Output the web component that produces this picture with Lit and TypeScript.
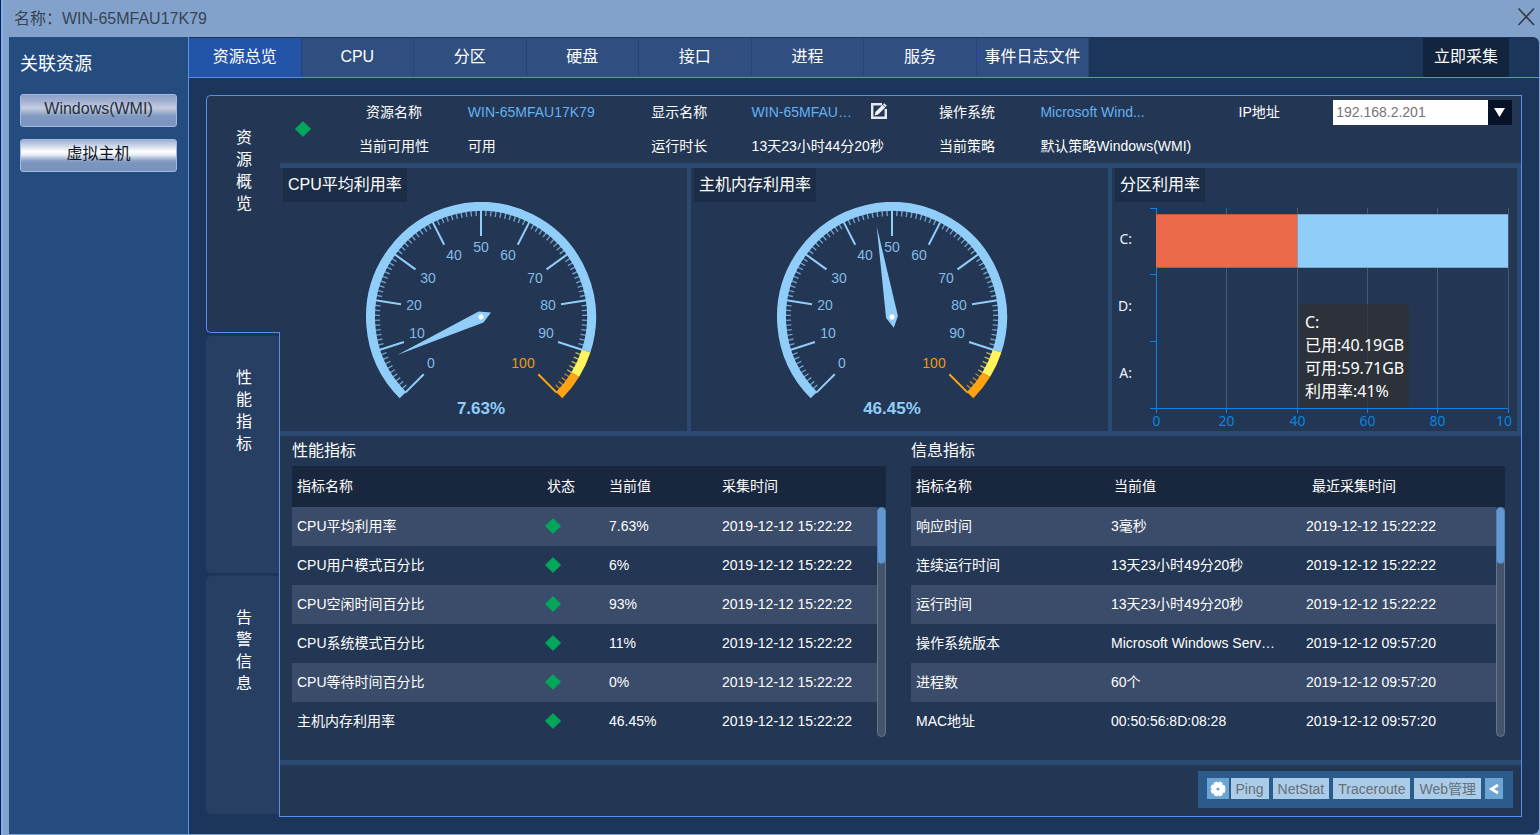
import { LitElement, html, css, svg } from "lit";
import { customElement, property } from "lit/decorators.js";
import { classMap } from "lit/directives/class-map.js";

const point = (cx: number, cy: number, r: number, deg: number) => {
  const a = (deg * Math.PI) / 180;
  return [cx + r * Math.cos(a), cy - r * Math.sin(a)];
};

@customElement("gauge-dial")
class GaugeDial extends LitElement {
  @property({ type: Number }) value = 0;

  static styles = css`
    :host { display: block; }
    svg { display: block; width: 401px; height: 229px; font: 14px "Liberation Sans", sans-serif; }
    .label { text-anchor: middle; fill: #84bbe6; }
    .label.hot { fill: #eb9715; }
    .value { text-anchor: middle; fill: #90cdf9; font-size: 17px; font-weight: bold; }
  `;

  private static labels = [
    [0, -50, 46], [10, -64, 16], [20, -67, -12], [30, -53, -39], [40, -27, -62],
    [50, 0, -70], [60, 27, -62], [70, 54, -39], [80, 67, -12], [90, 65, 16], [100, 42, 46],
  ];

  private cx = 201;
  private cy = 115;

  private angle(pct: number) {
    return 225 - pct * 2.7;
  }

  private band(from: number, to: number, color: string) {
    const [x1, y1] = point(this.cx, this.cy, 110.5, this.angle(from));
    const [x2, y2] = point(this.cx, this.cy, 110.5, this.angle(to));
    const large = (to - from) * 2.7 > 180 ? 1 : 0;
    return svg`<path d="M${x1} ${y1}A110.5 110.5 0 ${large} 1 ${x2} ${y2}" fill="none" stroke=${color} stroke-width="9" />`;
  }

  private tick(pct: number) {
    const major = pct % 10 === 0;
    const color = pct > 95 ? "#ffa312" : pct > 90 ? "#fff45c" : "#90cdf9";
    const [x1, y1] = point(this.cx, this.cy, 107, this.angle(pct));
    const [x2, y2] = point(this.cx, this.cy, major ? 81 : 101, this.angle(pct));
    return svg`<line x1=${x1} y1=${y1} x2=${x2} y2=${y2} stroke=${color}
      stroke-width=${major ? 2 : 1.4} opacity=${major ? 1 : 0.7} />`;
  }

  render() {
    const { cx, cy } = this;
    return html`<svg viewBox="0 0 401 229" role="img" aria-label="${this.value}%">
      ${Array.from({ length: 101 }, (_, i) => this.tick(i))}
      ${this.band(0, 90, "#90cdf9")} ${this.band(90, 95, "#fff45c")} ${this.band(95, 100, "#ffa312")}
      ${GaugeDial.labels.map(
        ([n, dx, dy]) => svg`<text class="label ${n === 100 ? "hot" : ""}" x=${cx + dx} y=${cy + dy + 5}>${n}</text>`
      )}
      <g transform="translate(${cx} ${cy}) rotate(${-this.angle(this.value)})">
        <path d="M92 0L0 -6L-11 0L0 6Z" fill="#90cdf9" />
        <circle r="2.6" fill="#fff" />
      </g>
      <text class="value" x=${cx} y=${cy + 97}>${this.value}%</text>
    </svg>`;
  }
}

@customElement("disk-chart")
class DiskChart extends LitElement {
  static styles = css`
    :host { display: block; position: relative; }
    svg { display: block; width: 401px; height: 229px; font: 14px "Noto Sans", "Noto Sans CJK SC", sans-serif; }
    .grid { stroke: #4a5868; }
    .axis { stroke: #0a84de; }
    .num { fill: #0a84de; text-anchor: middle; }
    .cat { fill: #f0f3f7; text-anchor: end; }
    .tip {
      position: absolute; left: 188px; top: 102px;
      padding: 7px 5px 5px; box-sizing: border-box;
      border-radius: 4px; background: rgba(50, 50, 50, 0.75); color: #fff;
      font: 16px/23px "Noto Sans", "Noto Sans CJK SC", sans-serif; white-space: nowrap;
    }
  `;

  render() {
    const xs = [44.5, 114.5, 185.5, 255.5, 325.5, 396.5];
    const ys = [6.5, 72.5, 139.5, 206.5];
    const marks = ["0", "20", "40", "60", "80", "10"];
    return html`<svg viewBox="0 0 401 229" role="img" aria-label="分区利用率">
        ${xs.slice(1).map((x) => svg`<line class="grid" x1=${x} x2=${x} y1="6" y2="206" />`)}
        <path class="axis" fill="none" d="M44.5 6V206.5H396.5" />
        ${ys.map((y) => svg`<line class="axis" x1="38" x2="44" y1=${y} y2=${y} />`)}
        ${xs.map((x) => svg`<line class="axis" x1=${x} x2=${x} y1="207" y2="211" />`)}
        <rect x="44" y="12" width="141.5" height="54" fill="#ec6a49" />
        <rect x="185.5" y="12" width="210.5" height="54" fill="#90cdf9" />
        <path d="M44 12.5H396M44 65.5H396" stroke="#000" stroke-opacity="0.18" />
        ${marks.map((t, i) => svg`<text class="num" x=${Math.min(xs[i], 392)} y="224">${t}</text>`)}
        ${["C:", "D:", "A:"].map((t, i) => svg`<text class="cat" x="20" y=${42 + i * 67}>${t}</text>`)}
      </svg>
      <div class="tip" role="tooltip">C:<br />已用:40.19GB<br />可用:59.71GB<br />利用率:41%</div>`;
  }
}

type Cell = unknown;

@customElement("metric-table")
class MetricTable extends LitElement {
  @property({ attribute: false }) heading = "";
  @property({ attribute: false }) columns: string[] = [];
  @property({ attribute: false }) widths: string[] = [];
  @property({ attribute: false }) rows: Cell[][] = [];

  static styles = css`
    :host { display: block; min-width: 0; }
    h2 { margin: 0; font-size: 16px; line-height: 30px; font-weight: normal; }
    .wrap { position: relative; }
    table { display: block; border-collapse: collapse; font-size: 14px; }
    thead { display: block; background: #19273e; }
    tr { display: table; width: 100%; table-layout: fixed; }
    tbody { display: block; height: 230px; overflow: hidden; margin-right: 9px; }
    th, td { box-sizing: border-box; padding: 0 5px; text-align: left; font-weight: normal; white-space: nowrap; }
    th { height: 41px; line-height: 40px; vertical-align: top; }
    td { height: 39px; line-height: 38px; vertical-align: top; }
    tbody tr:nth-child(odd) { background: #3a4c69; }
    .gem { display: block; width: 18px; height: 38px; margin-left: -3px; }
    .track {
      position: absolute; right: 0; top: 41px; bottom: 0; width: 9px; box-sizing: border-box;
      border-radius: 5px; border: 1px solid #66758a; background: #45546a;
    }
    .thumb {
      width: 9px; height: 57px; margin: -1px; box-sizing: border-box; border-radius: 5px;
      border: 1px solid #4484bd; background: #6598d0;
    }
  `;

  render() {
    return html`<h2 id="title">${this.heading}</h2>
      <div class="wrap">
        <table aria-labelledby="title">
          <thead>
            <tr>${this.columns.map((c, i) => html`<th scope="col" style="width:${this.widths[i]}">${c}</th>`)}</tr>
          </thead>
          <tbody>
            ${this.rows.map((r) => html`<tr>${r.map((c, i) => html`<td style="width:${this.widths[i]}">${c}</td>`)}</tr>`)}
          </tbody>
        </table>
        <div class="track"><div class="thumb"></div></div>
      </div>`;
  }
}

const gem = html`<svg class="gem" width="18" height="18" viewBox="0 0 18 18" role="img" aria-label="正常">
  <path d="M9 1.8L16.2 9L9 16.2L1.8 9Z" fill="#03a65a" stroke="#03a65a" stroke-width="1.2" stroke-linejoin="round" />
</svg>`;

@customElement("app-root")
class AppRoot extends LitElement {
  static styles = css`
    :host {
      display: flex; flex-direction: column; min-height: 100vh; box-sizing: border-box;
      padding: 0 1px 1px 8px; border-left: 1px solid #131f36;
      background: linear-gradient(90deg, #80b0fb 2px, #83a2cb 2px);
      color: #fff; font: 14px "Liberation Sans", "Noto Sans CJK SC", sans-serif;
    }
    button { font: inherit; color: inherit; border: 0; padding: 0; cursor: pointer; }
    .titlebar {
      height: 37px; box-sizing: border-box; display: flex; align-items: center; justify-content: space-between;
      padding: 0 3px 4px 5px; color: #384454; font-size: 16px;
    }
    .close { background: none; display: flex; }
    .frame { flex: 1; display: grid; grid-template-columns: 180px minmax(0, 1fr); }
    .side {
      background: #244c7f; border-right: 1px solid #5591ea; box-sizing: border-box;
      padding: 15px 11px; display: flex; flex-direction: column; gap: 12px;
    }
    .side h1 { margin: 0 0 6px; font-size: 18px; line-height: 24px; font-weight: normal; }
    .side button {
      height: 33px; box-sizing: border-box; padding-bottom: 4px; border: 1px solid #a5b8dd; border-radius: 3px;
      font-size: 16px; line-height: 26px; color: #26303f;
      background: linear-gradient(#8ba0c8, #a2b0d0 20%, #c6cde0 42%, #8199c2 68%, #7a94c0);
    }
    .side button.on { color: #10151d; background: linear-gradient(#9db0d4, #fff 38%, #e8ecf5 48%, #8ea3c9 66%, #7a94c0 74%); }
    .main { background: #1b355b; border-radius: 0 6px 6px 0; display: flex; flex-direction: column; }
    .tabs {
      display: flex; justify-content: space-between; height: 39px; padding: 1px 30px 0 0;
      border-bottom: 1px solid #5591ea;
    }
    .tabset { display: grid; grid-template-columns: repeat(8, 1fr); width: 68.2%; }
    .tabs button {
      font-size: 16px; line-height: 36px; padding-bottom: 2px; background: #304e80;
      border-right: 1px solid #274571; white-space: nowrap;
    }
    .tabs button.on { background: #2454a8; }
    .tabs .collect { width: 86px; background: #12243e; border: 0; }
    .content { flex: 1; display: grid; grid-template-columns: 73px minmax(0, 1fr); padding: 17px; }
    .vtabs { display: grid; grid-template-rows: repeat(3, 1fr); gap: 3px; padding-bottom: 3px; }
    .vtabs button {
      display: flex; justify-content: center; padding: 31px 25px 0 28px; box-sizing: border-box;
      font-size: 16px; line-height: 22px; background: #273f63; border-radius: 5px 0 0 5px; align-items: flex-start;
    }
    .vtabs button.on {
      position: relative; z-index: 1; margin-right: -1px; background: #233754;
      border: 1px solid #5591ea; border-right: 0; padding: 31px 26px 0 27px;
    }
    .panel { border: 1px solid #5591ea; background: #233754; display: flex; flex-direction: column; }
    .info {
      display: grid; height: 67px; grid-template-rows: 1fr 1fr; margin: 0;
      grid-template-columns: 46fr 136fr 151fr 133fr 154fr 135fr 155fr 136fr 194fr; white-space: nowrap; line-height: 32px;
    }
    .info .state { grid-row: 1 / 3; display: flex; justify-content: center; align-items: center; padding-bottom: 1px; }
    .info .name { text-align: center; }
    .info .val { padding-left: 6px; display: flex; }
    .link { color: #64b0f2; text-decoration: none; }
    .edit { background: none; display: flex; margin: 7px 12px 0 auto; align-self: flex-start; }
    .pick { position: relative; flex: 1; margin: 4px 9px 0 0; display: flex; align-self: flex-start; }
    select {
      appearance: none; flex: 1; height: 25px; border: 0; border-right: 24px solid #061227; border-radius: 0;
      padding: 0 3px; background: #fff; color: #757575; font: inherit; line-height: 25px;
    }
    .caret { position: absolute; right: 7px; top: 8px; pointer-events: none; }
    .charts {
      display: grid; grid-template-columns: 411fr 421fr 409fr;
      border: solid #2b4a72; border-width: 5px 0;
    }
    .chart { border-right: 4px solid #2b4a72; min-width: 0; }
    .chart h2 {
      margin: 0 0 0 3px; padding: 0 5px; width: max-content; line-height: 34px;
      font-size: 16px; font-weight: normal; background: #1b2d47;
    }
    .tables { display: grid; grid-template-columns: 1fr 1fr; gap: 25px; padding: 0 16px 23px 12px; }
    .foot { border-top: 5px solid #2b4a72; padding: 6px 8px 8px; display: flex; justify-content: flex-end; }
    .tools { display: flex; gap: 4px; padding: 7px 10px 9px 9px; background: #2b5b8b; }
    .tools button { height: 21px; padding: 1px 5px 0; background: #abcce8; color: #666f78; line-height: 20px; }
    .tools .ico { padding: 0 3px; background: #6ca4d4; display: flex; align-items: center; }
    .tools .gear { margin-right: -2px; }
  `;

  private time = "2019-12-12 15:22:22";
  private early = "2019-12-12 09:57:20";

  private vtab(text: string, on = false) {
    return html`<button class=${classMap({ on })}>${text}</button>`;
  }

  render() {
    const perf = [
      ["CPU平均利用率", "7.63%"], ["CPU用户模式百分比", "6%"], ["CPU空闲时间百分比", "93%"],
      ["CPU系统模式百分比", "11%"], ["CPU等待时间百分比", "0%"], ["主机内存利用率", "46.45%"],
    ].map(([n, v]) => [n, gem, v, this.time]);
    const facts = [
      ["响应时间", "3毫秒", this.time], ["连续运行时间", "13天23小时49分20秒", this.time],
      ["运行时间", "13天23小时49分20秒", this.time], ["操作系统版本", "Microsoft Windows Serv…", this.early],
      ["进程数", "60个", this.early], ["MAC地址", "00:50:56:8D:08:28", this.early],
    ];
    const tabs = ["资源总览", "CPU", "分区", "硬盘", "接口", "进程", "服务", "事件日志文件"];
    return html`
      <header class="titlebar">
        <span>名称：WIN-65MFAU17K79</span>
        <button class="close" aria-label="关闭">
          <svg width="20" height="20" viewBox="0 0 20 20"><path d="M2.5 1.5L18 18M18 1.5L2.5 18" stroke="#3a4049" stroke-width="1.8" /></svg>
        </button>
      </header>
      <div class="frame">
        <aside class="side">
          <h1>关联资源</h1>
          <button>Windows(WMI)</button>
          <button class="on">虚拟主机</button>
        </aside>
        <main class="main">
          <nav class="tabs">
            <div class="tabset">${tabs.map((t, i) => html`<button class=${classMap({ on: i === 0 })}>${t}</button>`)}</div>
            <button class="collect">立即采集</button>
          </nav>
          <div class="content">
            <div class="vtabs">${this.vtab("资源概览", true)}${this.vtab("性能指标")}${this.vtab("告警信息")}</div>
            <section class="panel">
              <div class="info">
                <div class="state">${gem}</div>
                <span class="name">资源名称</span><span class="val"><a class="link" href="#">WIN-65MFAU17K79</a></span>
                <span class="name">显示名称</span>
                <span class="val"><a class="link" href="#">WIN-65MFAU…</a>
                  <button class="edit" aria-label="编辑">
                    <svg width="16" height="16" viewBox="0 0 16 16">
                      <path d="M11 1.2H1.2V14.8H14.8V6" fill="none" stroke="#e6e9ed" stroke-width="2.4" />
                      <path d="M3.6 12.4L4.6 8.8L11.6 1.8L14.2 4.4L7.2 11.4Z" fill="#f1f3f5" />
                      <path d="M12.6 .8L15.2 3.4" stroke="#f1f3f5" stroke-width="1.8" />
                    </svg>
                  </button>
                </span>
                <span class="name">操作系统</span><span class="val"><a class="link" href="#">Microsoft Wind...</a></span>
                <label class="name" for="ip">IP地址</label>
                <span class="val"><span class="pick">
                  <select id="ip"><option>192.168.2.201</option></select>
                  <svg class="caret" width="11" height="9" viewBox="0 0 11 9"><path d="M0 0H11L5.5 9Z" fill="#fff" /></svg>
                </span></span>
                <span class="name">当前可用性</span><span class="val">可用</span>
                <span class="name">运行时长</span><span class="val">13天23小时44分20秒</span>
                <span class="name">当前策略</span><span class="val">默认策略Windows(WMI)</span>
              </div>
              <div class="charts">
                <div class="chart"><h2>CPU平均利用率</h2><gauge-dial .value=${7.63}></gauge-dial></div>
                <div class="chart"><h2>主机内存利用率</h2><gauge-dial .value=${46.45}></gauge-dial></div>
                <div class="chart"><h2>分区利用率</h2><disk-chart></disk-chart></div>
              </div>
              <div class="tables">
                <metric-table .heading=${"性能指标"} .columns=${["指标名称", "状态", "当前值", "采集时间"]}
                  .widths=${["250px", "62px", "113px", "auto"]} .rows=${perf}></metric-table>
                <metric-table .heading=${"信息指标"} .columns=${["指标名称", "当前值", "最近采集时间"]}
                  .widths=${["33.33%", "33.33%", "auto"]} .rows=${facts}></metric-table>
              </div>
              <div class="foot">
                <div class="tools">
                  <button class="ico gear" aria-label="设置">
                    <svg width="16" height="16" viewBox="0 0 16 16">
                      <circle cx="8" cy="8" r="4" fill="none" stroke="#fff" stroke-width="4.8" />
                      <circle cx="8" cy="8" r="6.2" fill="none" stroke="#fff" stroke-width="2.6" stroke-dasharray="3.6 1.27" />
                    </svg>
                  </button>
                  <button>Ping</button><button>NetStat</button><button>Traceroute</button><button>Web管理</button>
                  <button class="ico" aria-label="收起">
                    <svg width="12" height="12" viewBox="0 0 12 12"><path d="M10 2L3.5 6L10 10" fill="none" stroke="#fff" stroke-width="2.8" /></svg>
                  </button>
                </div>
              </div>
            </section>
          </div>
        </main>
      </div>`;
  }
}
